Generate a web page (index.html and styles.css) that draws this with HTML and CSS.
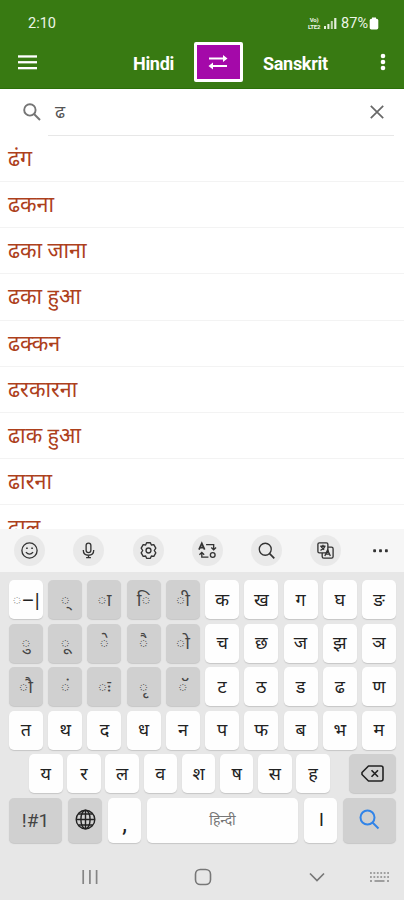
FILE: index.html
```html
<!DOCTYPE html>
<html lang="hi">
<head>
<meta charset="utf-8">
<title>Hindi Sanskrit</title>
<link rel="stylesheet" href="styles.css">
</head>
<body>
<div class="phone">
  <header class="header">
    <div class="status">
      <span class="clock">2:10</span>
      <span class="volte"><b>Vo)</b><b>LTE2</b></span>
      <svg class="signal" width="13" height="12" viewBox="0 0 13 12" fill="#e6f0df"><rect x="0" y="9" width="2" height="3"/><rect x="3.4" y="7" width="2" height="5"/><rect x="6.8" y="4" width="2" height="8" opacity=".8"/><rect x="10.2" y="1" width="2.2" height="11"/></svg>
      <span class="pct">87%</span>
      <svg class="batt" width="10" height="13" viewBox="0 0 10 13" fill="#fff"><rect x="3" y="0.500" width="4" height="2"/><rect x=".7" y="1.800" width="8.600" height="10.600" rx="1.600"/></svg>
    </div>
    <div class="appbar">
      <svg class="menu" width="19" height="15" viewBox="0 0 19 15" fill="#fff"><rect y=".3" width="19" height="2.300"/><rect y="6.100" width="19" height="2.300"/><rect y="12" width="19" height="2.300"/></svg>
      <span class="from">Hindi</span>
      <div class="swap"><svg width="20" height="16" viewBox="0 0 20 16" fill="none" stroke="#fff" stroke-width="2"><path d="M1 4.500H17"/><path d="M4 12H19"/><path d="M15 1L19.500 4.500L15 8ZM5 8.500L.5 12L5 15.500Z" fill="#fff" stroke="none"/></svg></div>
      <span class="to">Sanskrit</span>
      <svg class="more" width="6" height="18" viewBox="0 0 6 18" fill="#fff"><circle cx="3" cy="3" r="2.300"/><circle cx="3" cy="9" r="2.300"/><circle cx="3" cy="15" r="2.300"/></svg>
    </div>
  </header>
  <div class="search">
    <svg class="glass" width="18" height="18" viewBox="0 0 18 18" fill="none" stroke="#757575" stroke-width="1.900"><circle cx="6.900" cy="6.900" r="5.700"/><path d="M11 11L17 17"/></svg>
    <div class="field"><span>ढ</span>
      <svg width="14" height="14" viewBox="0 0 14 14" fill="none" stroke="#686868" stroke-width="1.700"><path d="M.8.8L13.200 13.200M13.200.8L.8 13.200"/></svg>
    </div>
  </div>
  <ul class="list">
    <li>ढंग</li><li>ढकना</li><li>ढका जाना</li><li>ढका हुआ</li><li>ढक्कन</li><li>ढरकारना</li><li>ढाक हुआ</li><li>ढारना</li><li>ढाल</li>
  </ul>
  <div class="tools">
    <i><svg viewBox="0 0 20 20"><circle cx="10" cy="10" r="8"/><path d="M6.200 11.700Q10 16 13.800 11.700"/><path d="M7.300 6.800v1.700M12.700 6.800v1.700" stroke-width="1.700"/></svg></i>
    <i><svg viewBox="0 0 20 20"><rect x="7.500" y="2.300" width="5" height="10" rx="2.500"/><path d="M4.500 9.500Q4.500 15 10 15Q15.500 15 15.500 9.500M10 15v2.500M7.500 17.500h5"/></svg></i>
    <i><svg viewBox="0 0 20 20"><path d="M8 1.800h4l1 2.400 2.600-.4 2.100 3.700L16.100 10l1.600 2.500-2.100 3.700-2.600-.4-1 2.400H8l-1-2.400-2.600.4-2.100-3.700L3.900 10 2.300 7.500l2.100-3.700 2.600.4Z" stroke-linejoin="round"/><circle cx="10" cy="10" r="2.600"/></svg></i>
    <i><svg viewBox="0 0 20 20"><path d="M8.500 3.800H16.500v5M14 6.800L16.500 9.300 19 6.800M11 17H4V12.500M1.500 14.500L4 12 6.500 14.500" /><path d="M1 9L4 2.500l3 6.500M2.200 7h3.600" stroke-width="1.800"/><circle cx="15.500" cy="14.800" r="2.500"/></svg></i>
    <i><svg viewBox="0 0 20 20"><circle cx="8.700" cy="8.700" r="6.300"/><path d="M13.300 13.300L18.200 18.200" stroke-width="1.800"/></svg></i>
    <i><svg viewBox="0 0 20 20"><rect x="2" y="2" width="10.500" height="10.500" rx="1.500"/><path d="M12.500 6.500h3.800q1.700 0 1.700 1.700v8.100q0 1.700-1.700 1.700H8.200q-1.700 0-1.700-1.700v-3.800"/><path d="M4.500 5.500h5.500M7.300 4v1.500M9.300 5.700Q8.300 8.700 4.700 9.800M5.500 6.200L8.500 9.300M9.300 15.800L12.200 9.300l2.900 6.500M10.300 13.800h3.800"/></svg></i>
    <i class="plain"><svg viewBox="0 0 20 20" class="dots"><rect x="2.300" y="8.800" width="3" height="3" rx=".8"/><rect x="8.500" y="8.800" width="3" height="3" rx=".8"/><rect x="14.700" y="8.800" width="3" height="3" rx=".8"/></svg></i>
  </div>
  <div class="keyboard">
    <div class="row ten"><kbd class="halant"><span>◌</span>–|</kbd><kbd class="sign">◌्</kbd><kbd class="sign">◌ा</kbd><kbd class="sign">◌ि</kbd><kbd class="sign">◌ी</kbd><kbd>क</kbd><kbd>ख</kbd><kbd>ग</kbd><kbd>घ</kbd><kbd>ङ</kbd></div>
    <div class="row ten"><kbd class="sign">◌ु</kbd><kbd class="sign">◌ू</kbd><kbd class="sign">◌े</kbd><kbd class="sign">◌ै</kbd><kbd class="sign">◌ो</kbd><kbd>च</kbd><kbd>छ</kbd><kbd>ज</kbd><kbd>झ</kbd><kbd>ञ</kbd></div>
    <div class="row ten"><kbd class="sign">◌ौ</kbd><kbd class="sign">◌ं</kbd><kbd class="sign">◌ः</kbd><kbd class="sign">◌ृ</kbd><kbd class="sign">◌ॅ</kbd><kbd>ट</kbd><kbd>ठ</kbd><kbd>ड</kbd><kbd>ढ</kbd><kbd>ण</kbd></div>
    <div class="row ten"><kbd>त</kbd><kbd>थ</kbd><kbd>द</kbd><kbd>ध</kbd><kbd>न</kbd><kbd>प</kbd><kbd>फ</kbd><kbd>ब</kbd><kbd>भ</kbd><kbd>म</kbd></div>
    <div class="row eight"><kbd>य</kbd><kbd>र</kbd><kbd>ल</kbd><kbd>व</kbd><kbd>श</kbd><kbd>ष</kbd><kbd>स</kbd><kbd>ह</kbd><kbd class="fn back"><svg width="23" height="17" viewBox="0 0 23 17" fill="none" stroke="#222" stroke-width="1.600"><path d="M7.500 1H20q2 0 2 2v11q0 2-2 2H7.500L1 9.500V7.500Z" stroke-linejoin="round"/><path d="M10.500 5.200l6.500 6.600M17 5.200l-6.500 6.600"/></svg></kbd></div>
    <div class="row bottom"><kbd class="fn sym">!#1</kbd><kbd class="fn globe"><svg width="21" height="21" viewBox="0 0 21 21" fill="none" stroke="#222" stroke-width="1.400"><circle cx="10.500" cy="10.500" r="9.300"/><ellipse cx="10.500" cy="10.500" rx="4.600" ry="9.300"/><path d="M1.500 10.500h18M10.500 1v19M3.500 5h14M3.500 16h14"/></svg></kbd><kbd class="comma">,</kbd><kbd class="space">हिन्दी</kbd><kbd class="danda">।</kbd><kbd class="fn globe"><svg width="21" height="21" viewBox="0 0 21 21" fill="none" stroke="#3184e8" stroke-width="2"><circle cx="8.500" cy="8.500" r="7"/><path d="M13.500 13.500L19.500 19.500"/></svg></kbd></div>
  </div>
  <nav class="nav">
    <svg width="16" height="16" viewBox="0 0 16 16" stroke="#858585" stroke-width="1.700"><path d="M1.200 1v14M7.900 1v14M14.600 1v14"/></svg>
    <svg width="18" height="18" viewBox="0 0 18 18" fill="none" stroke="#777" stroke-width="1.600"><rect x="1.500" y="1.500" width="15" height="15" rx="4.800"/></svg>
    <svg width="16" height="10" viewBox="0 0 16 10" fill="none" stroke="#777" stroke-width="1.700"><path d="M1 1.500L8 8.500L15 1.500"/></svg>
    <svg width="19" height="12" viewBox="0 0 19 12" stroke="#888" stroke-width="1.500"><path d="M0 2h19M0 6h19" stroke-dasharray="1.800 1.640"/><path d="M0 10h2M4.500 10h10M17 10h2"/></svg>
  </nav>
</div>
</body>
</html>
```

FILE: styles.css
```css
* { box-sizing: border-box; }
body { margin: 0; background: #fff; font-family: Roboto, "Noto Sans Devanagari", "Noto Sans", sans-serif; }
svg { display: block; flex: none; }
.phone { width: 404px; height: 900px; display: flex; flex-direction: column; overflow: hidden; }

.header { height: 89px; flex: none; background: #387a12; color: #fff; border-bottom: 1px solid #2b7008; }
.status { height: 40px; padding: 6px 25px 0 28px; display: flex; align-items: center; font-size: 14.500px; color: #edf5e8; }
.clock { flex: 1; }
.volte { display: flex; flex-direction: column; width: 14px; margin-right: 3px; font-size: 6px; line-height: 7px; align-items: center; letter-spacing: -.2px; }
.signal { margin-right: 4px; }
.pct { margin-right: 1px; }
.appbar { height: 44px; padding: 0 18px; display: flex; align-items: center; font-size: 18px; font-weight: 700; }
.menu { margin-right: 96px; }
.from { width: 61px; }
.swap { width: 49px; height: 40px; margin-right: 20px; padding-right: 2px; border: 3px solid #fff; border-radius: 2px; background: #a409a9; display: flex; align-items: center; justify-content: center; }
.to { flex: 1; }
.from, .to { letter-spacing: -.3px; padding-top: 2px; }

.search { height: 47px; flex: none; display: flex; padding: 0 10px 0 23px; }
.glass { margin: 14px 7px 0 0; }
.field { flex: 1; border-bottom: 1px solid #e7e7e7; display: flex; align-items: center; justify-content: space-between; padding: 0 10px 0 7px; font-size: 18px; color: #555; }
.field span { padding-top: 2px; }

.list { list-style: none; margin: 0; padding: 0; height: 393px; flex: none; overflow: hidden; color: #ad401c; font-size: 21.500px; }
.list li { height: 46.150px; padding: 0 8px; line-height: 45px; border-bottom: 1px solid #f3f3f3; white-space: nowrap; }

.tools { height: 43px; flex: none; background: #f6f6f6; display: flex; gap: 28.300px; padding: 5.500px 0 0 14px; }
.tools i { width: 31px; height: 31px; flex: none; border-radius: 50%; background: #e9e9e9; display: flex; align-items: center; justify-content: center; }
.tools .plain { background: none; margin-left: -5px; }
.tools svg { width: 19px; height: 19px; fill: none; stroke: #333; stroke-width: 1.400; }
.tools .dots { fill: #333; stroke: none; }

.keyboard { height: 275px; flex: none; background: #e7e7e7; padding: 8px 8px 0 9px; display: grid; grid-template-rows: repeat(5, 39px) 45px; row-gap: 4.500px; }
.row { display: grid; }
.ten { grid-template-columns: repeat(10, 34px); justify-content: space-between; }
.eight { grid-template-columns: repeat(8, 33.500px) 1fr; column-gap: 4.700px; padding-left: 20px; }
.bottom { grid-template-columns: 53px 34px 33px 151px 33px 53px; justify-content: space-between; }
kbd { min-width: 0; padding-top: 2px; background: #fefefe; border-radius: 5px; box-shadow: 0 1px 1px #c6c6c6; display: flex; align-items: center; justify-content: center; font-family: Roboto, "Noto Sans Devanagari", "Noto Sans", sans-serif; font-size: 18px; color: #222; white-space: nowrap; overflow: hidden; }
.sign, .fn { background: #d0d0d0; }
.fn { padding-top: 0; }
.globe { padding-bottom: 2px; }
.sign { font-size: 18px; color: #444; }
.halant { font-size: 20px; }
.halant span { color: #888; font-size: 18px; }
.back { width: 47px; justify-self: end; }
.sym { font-size: 19px; color: #444; }
.comma { font-size: 24px; padding-top: 8px; }
.space { font-size: 14px; color: #777; }
.danda { font-size: 21px; }

.nav { flex: 1; background: #e7e7e7; display: flex; align-items: center; padding: 7px 0 0 82px; }
.nav svg:nth-child(2) { margin-left: 96px; }
.nav svg:nth-child(3) { margin-left: 97px; }
.nav svg:nth-child(4) { margin-left: 45px; }
```
